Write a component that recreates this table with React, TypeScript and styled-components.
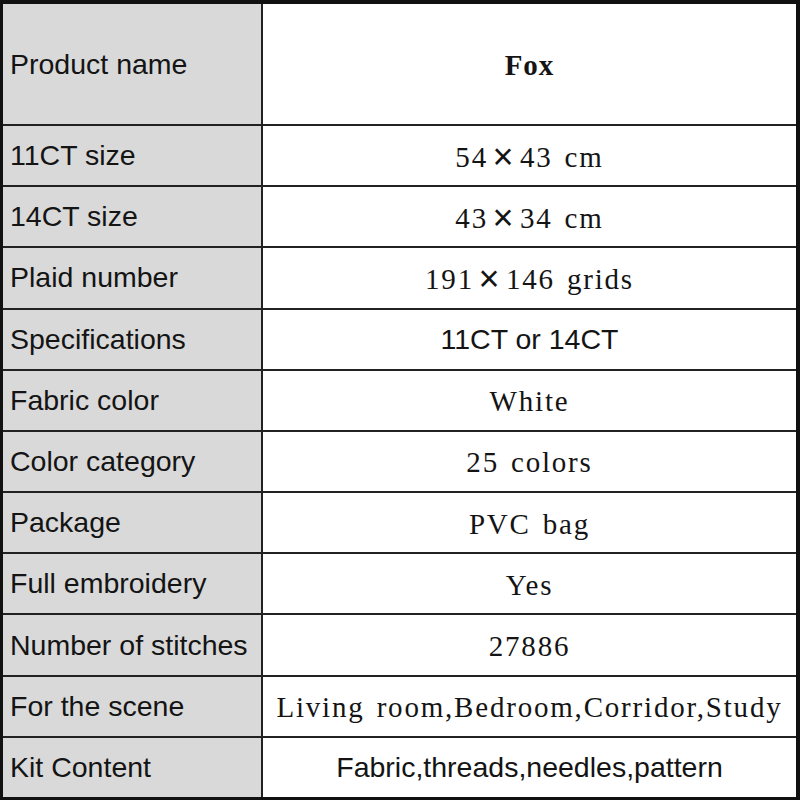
import { Fragment } from 'react';
import styled, { createGlobalStyle } from 'styled-components';

const GlobalStyle = createGlobalStyle`
  html, body {
    margin: 0;
    padding: 0;
    background: #ffffff;
  }
`;

const Sheet = styled.div`
  box-sizing: border-box;
  width: 800px;
  height: 800px;
  border-style: solid;
  border-color: #111;
  border-width: 4px 4px 3px 3px;
  background: #222;
  display: grid;
  grid-template-columns: 258px 1fr;
  grid-template-rows: 120px repeat(11, 1fr);
  gap: 2px;
`;

const LabelCell = styled.div`
  background: #d9d9d9;
  display: flex;
  align-items: center;
  padding-left: 7px;
  font-family: 'Liberation Sans', Arial, sans-serif;
  font-size: 28.5px;
  color: #141414;
  white-space: nowrap;
`;

const ValueCell = styled.div<{ $kind: 'serif' | 'sans' | 'bold' }>`
  background: #ffffff;
  display: flex;
  align-items: center;
  justify-content: center;
  padding-top: ${(p) => (p.$kind === 'sans' ? '0' : '3px')};
  white-space: nowrap;
  color: #141414;
  font-family: ${(p) =>
    p.$kind === 'sans'
      ? "'Liberation Sans', Arial, sans-serif"
      : "'Liberation Serif', 'Times New Roman', serif"};
  font-size: ${(p) => (p.$kind === 'sans' ? '28.5px' : '29px')};
  font-weight: ${(p) => (p.$kind === 'bold' ? 700 : 400)};
  letter-spacing: ${(p) => (p.$kind === 'sans' ? '0' : p.$kind === 'bold' ? '1px' : '1.8px')};
  word-spacing: ${(p) => (p.$kind === 'sans' ? '0' : '3px')};
`;

const Times = styled.span`
  display: inline-block;
  width: 30px;
  margin-right: 2px;
  text-align: center;
  font-family: 'Liberation Sans', Arial, sans-serif;
  font-size: 36px;
  line-height: 1;
  letter-spacing: 0;
`;

type Row = { label: string; value: string; kind: 'serif' | 'sans' | 'bold' };

const rows: Row[] = [
  { label: 'Product name', value: 'Fox', kind: 'bold' },
  { label: '11CT size', value: '54×43 cm', kind: 'serif' },
  { label: '14CT size', value: '43×34 cm', kind: 'serif' },
  { label: 'Plaid number', value: '191×146 grids', kind: 'serif' },
  { label: 'Specifications', value: '11CT or 14CT', kind: 'sans' },
  { label: 'Fabric color', value: 'White', kind: 'serif' },
  { label: 'Color category', value: '25 colors', kind: 'serif' },
  { label: 'Package', value: 'PVC bag', kind: 'serif' },
  { label: 'Full embroidery', value: 'Yes', kind: 'serif' },
  { label: 'Number of stitches', value: '27886', kind: 'serif' },
  { label: 'For the scene', value: 'Living room,Bedroom,Corridor,Study', kind: 'serif' },
  { label: 'Kit Content', value: 'Fabric,threads,needles,pattern', kind: 'sans' },
];

// split on the multiplication sign so it can sit as a full-width glyph
const renderValue = (value: string) => {
  const parts = value.split('×');
  return parts.map((part, i) => (
    <Fragment key={i}>
      {i > 0 && <Times>×</Times>}
      {part}
    </Fragment>
  ));
};

const App = () => {
  return (
    <>
      <GlobalStyle />
      <Sheet>
        {rows.map((row) => (
          <Fragment key={row.label}>
            <LabelCell>{row.label}</LabelCell>
            <ValueCell $kind={row.kind}>{renderValue(row.value)}</ValueCell>
          </Fragment>
        ))}
      </Sheet>
    </>
  );
};

export default App;
